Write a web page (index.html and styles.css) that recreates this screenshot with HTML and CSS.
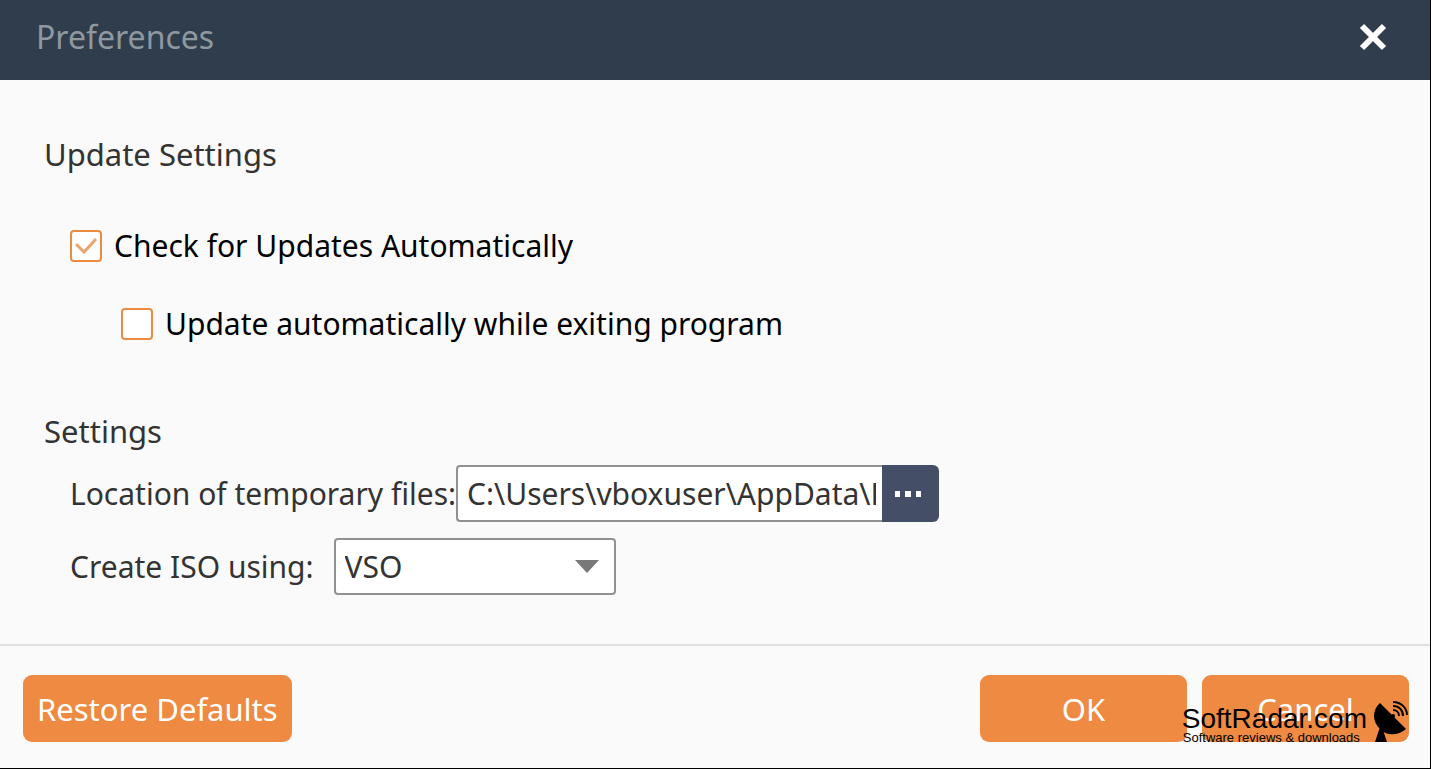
FILE: index.html
```html
<!DOCTYPE html>
<html lang="en">
<head>
<meta charset="utf-8">
<title>Preferences</title>
<link rel="stylesheet" href="styles.css">
</head>
<body>
<main class="dialog">
  <header class="titlebar">
    <h1 class="title">Preferences</h1>
    <button class="close" type="button" aria-label="Close">
      <svg width="28" height="28" viewBox="0 0 28 28" aria-hidden="true"><path d="M3 3L25 25M25 3L3 25" stroke="currentColor" stroke-width="6"/></svg>
    </button>
  </header>
  <form class="content">
    <section class="updates">
      <h2 class="heading">Update Settings</h2>
      <label class="check"><input class="box" type="checkbox" checked>Check for Updates Automatically</label>
      <label class="check nested"><input class="box" type="checkbox">Update automatically while exiting program</label>
    </section>
    <section class="settings">
      <h2 class="heading">Settings</h2>
      <div class="field">
        <label for="temp">Location of temporary files:</label>
        <div class="path">
          <input class="path-input" id="temp" type="text" value="C:\Users\vboxuser\AppData\Local\Temp">
          <button class="browse" type="button" aria-label="Browse">
            <svg width="26" height="6" viewBox="0 0 26 6" aria-hidden="true"><path d="M0 0h5v6H0zM10 0h6v6h-6zM21 0h5v6h-5z" fill="currentColor"/></svg>
          </button>
        </div>
      </div>
      <div class="field iso">
        <label for="iso">Create ISO using:</label>
        <div class="select-wrap">
          <select class="select" id="iso"><option>VSO</option></select>
          <svg class="arrow" width="24" height="14" viewBox="0 0 24 14" aria-hidden="true"><path d="M0 0H24L12 13Z" fill="#787878"/></svg>
        </div>
      </div>
    </section>
  </form>
  <footer class="footer">
    <button class="button" type="button">Restore Defaults</button>
    <div class="actions">
      <button class="button wide" type="button">OK</button>
      <button class="button wide" type="button">Cancel</button>
    </div>
  </footer>
  <div class="watermark">
    <div>
      <div class="brand">SoftRadar.com</div>
      <div class="tagline">Software reviews &amp; downloads</div>
    </div>
    <svg width="35" height="41" viewBox="0 0 35 41" aria-hidden="true">
      <path d="M7 2C-1 9-1 20 7 28C13 35 25 35 33 28ZM7 26L2 41H14L10 29Z" fill="#000"/>
      <circle cx="20" cy="15" r="2" fill="#000"/>
      <path d="M20 9C23 9 26 11 26 15M20 5C26 5 30 9 30 15M20 1C28 1 34 7 34 14" fill="none" stroke="#000" stroke-width="2"/>
    </svg>
  </div>
</main>
</body>
</html>
```
FILE: styles.css
```css
* { box-sizing: border-box; }
body {
  margin: 0;
  background: #fafafa;
  font-family: "Noto Sans", "Open Sans", sans-serif;
  font-size: 30px;
  line-height: 40px;
  color: #333;
}
button, input, select { font: inherit; color: inherit; margin: 0; }
button { border: 0; padding: 0; cursor: pointer; }
.dialog {
  position: relative;
  min-height: 100vh;
  display: flex;
  flex-direction: column;
  border-right: 1px solid #000;
  border-bottom: 1px solid #000;
}
.titlebar {
  display: flex;
  align-items: center;
  justify-content: space-between;
  height: 80px;
  padding: 0 43px 6px 36px;
  background: #2f3d4d;
}
.title { margin: 0; font-size: 32px; font-weight: 400; color: #8f989f; }
.close { display: flex; background: none; color: #fff; }
.content { flex: 1; padding: 54px 44px 49px; }
.heading { margin: 0; font-size: 31px; font-weight: 400; }
.updates { display: flex; flex-direction: column; align-items: flex-start; }
.check { display: flex; align-items: center; gap: 12px; margin: 52px 0 0 26px; color: #000; }
.nested { margin: 38px 0 0 77px; }
.box {
  appearance: none;
  width: 32px;
  height: 32px;
  margin: 0;
  border: 2px solid #e98b43;
  border-radius: 4px;
  background: #fff;
}
.box:checked {
  background: #fff url("data:image/svg+xml,%3Csvg xmlns='http://www.w3.org/2000/svg' viewBox='0 0 28 28'%3E%3Cpath d='M4 12L12 20L24 7' fill='none' stroke='%23eda56c' stroke-width='3'/%3E%3C/svg%3E") center / 28px 28px no-repeat;
}
.settings { display: flex; flex-direction: column; margin-top: 67px; }
.field { display: flex; align-items: center; margin: 14px 0 0 26px; }
.iso { margin-top: 16px; gap: 20px; }
.path { display: flex; width: 483px; height: 57px; }
.path-input {
  flex: 1;
  min-width: 0;
  padding: 0 6px 0 9px;
  border: 2px solid #919191;
  border-right: 0;
  border-radius: 4px 0 0 4px;
  background: #fff;
}
.browse {
  display: flex;
  align-items: center;
  justify-content: center;
  width: 57px;
  padding: 0 5px 0 0;
  border-radius: 0 6px 6px 0;
  background: #444f67;
  color: #fff;
}
.select-wrap { position: relative; width: 282px; height: 57px; }
.select {
  appearance: none;
  width: 100%;
  height: 100%;
  padding: 0 40px 0 9px;
  border: 2px solid #919191;
  border-radius: 4px;
  background: #fff;
}
.arrow { position: absolute; right: 17px; top: 22px; pointer-events: none; }
.footer {
  display: flex;
  justify-content: space-between;
  padding: 29px 21px 26px 23px;
  border-top: 2px solid #dfdfdf;
}
.actions { display: flex; gap: 15px; }
.button { height: 67px; padding: 0 14px; border-radius: 9px; background: #ee8a41; color: #fff; font-size: 31px; }
.wide { width: 207px; }
.watermark {
  position: absolute;
  right: 22px;
  bottom: 26px;
  display: flex;
  align-items: flex-end;
  gap: 6px;
  font-family: "Liberation Sans", Arial, sans-serif;
  color: #000;
  pointer-events: none;
}
.brand { font-size: 28px; line-height: 30px; }
.tagline { padding-left: 1px; font-size: 13px; line-height: 8px; }
```
